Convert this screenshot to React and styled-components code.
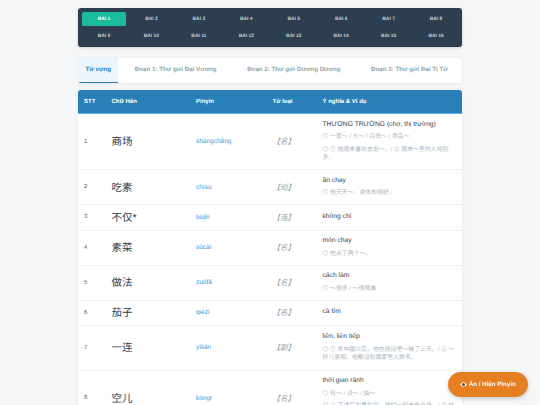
import React, { useState } from "react";
import styled, { createGlobalStyle } from "styled-components";

const GlobalStyle = createGlobalStyle`
  html, body {
    margin: 0;
    padding: 0;
    height: 405px;
    overflow: hidden;
    background: #f4f6f7;
    font-family: "Liberation Sans", "Noto Sans CJK SC", sans-serif;
    color: #2c3e50;
    text-rendering: geometricPrecision;
  }
  button { text-rendering: geometricPrecision; }
  * { box-sizing: border-box; }
`;

const Page = styled.div`
  width: 384px;
  margin: 0 auto;
  padding-top: 8.25px;
`;
const LessonNav = styled.nav`
  display: grid;
  grid-template-columns: repeat(8, 1fr);
  gap: 3px;
  padding: 3.75px;
  background: #2c3e50;
  border-radius: 3px;
  box-shadow: 0 1px 3px rgba(0, 0, 0, 0.15);
`;
const LessonButton = styled.button`
  height: 14.25px;
  padding: 0;
  border: none;
  border-radius: 1.5px;
  background: ${(p) => (p.$active ? "#1abc9c" : "transparent")};
  color: ${(p) => (p.$active ? "#fff" : "#c5ced6")};
  font-family: inherit;
  font-size: 4.9px;
  font-weight: 700;
  cursor: pointer;
`;
const Tabs = styled.div`
  display: flex;
  justify-content: space-between;
  height: 24.5px;
  margin-top: 10.75px;
  background: #fff;
  border-radius: 3px;
  overflow: hidden;
  box-shadow: 0 0.75px 3px rgba(0, 0, 0, 0.07);
`;
const Tab = styled.button`
  padding: 0 ${(p) => (p.$active ? "7.5px" : "14.2px")};
  border: none;
  border-bottom: 0.75px solid ${(p) => (p.$active ? "#2980b9" : "transparent")};
  background: ${(p) => (p.$active ? "#ebf5fb" : "#fff")};
  color: ${(p) => (p.$active ? "#2980b9" : "#95a5a6")};
  font-family: inherit;
  font-size: 6.2px;
  font-weight: 700;
  white-space: nowrap;
  cursor: pointer;
`;
const TableCard = styled.div`
  margin-top: 7.5px;
  background: #fff;
  border-radius: 3px 3px 0 0;
  overflow: hidden;
  box-shadow: 0 0.75px 4px rgba(0, 0, 0, 0.06);
`;
const Table = styled.table`
  width: 100%;
  table-layout: fixed;
  border-collapse: collapse;
`;
const HeadCell = styled.th`
  height: 23.5px;
  padding: 0 6px;
  background: #2980b9;
  border-bottom: 0.75px solid #5dade2;
  color: #fff;
  font-size: 6px;
  font-weight: 700;
  text-align: left;
`;
const Row = styled.tr`
  height: ${(p) => p.$h}px;
  border-bottom: 0.4px solid #ecf0f1;
`;
const Cell = styled.td`
  padding: 0 6px;
  vertical-align: middle;
`;
const Index = styled(Cell)`
  font-size: 6px;
  color: #555;
`;
const Hanzi = styled(Cell)`
  font-size: 10.5px;
  color: #2c3e50;
`;
const Pinyin = styled(Cell)`
  font-size: 6.5px;
  color: #3498db;
`;
const WordType = styled(Cell)`
  font-size: 7.5px;
  font-style: italic;
  color: #95a5a6;
`;
const Meaning = styled.div`
  font-size: 6.7px;
  line-height: 8.4px;
  color: #2c3e50;
`;
const Example = styled.div`
  margin-top: 4.2px;
  font-size: 5.9px;
  line-height: 8.25px;
  color: #aeb6bb;
`;
const ToggleButton = styled.button`
  position: fixed;
  left: 448px;
  top: 372px;
  width: 79.5px;
  height: 25px;
  display: flex;
  align-items: center;
  justify-content: center;
  gap: 2px;
  padding: 0;
  border: none;
  border-radius: 12.5px;
  background: #e67e22;
  box-shadow: 0 1.5px 4px rgba(0, 0, 0, 0.2);
  color: #fff;
  font-family: inherit;
  font-size: 6.2px;
  font-weight: 700;
  cursor: pointer;
`;

const lessons = Array.from({ length: 16 }, (_, i) => i + 1);
const tabs = [
  "Từ vựng",
  "Đoạn 1: Thư gửi Đại Vương",
  "Đoạn 2: Thư gửi Dương Dương",
  "Đoạn 3: Thư gửi Đại Tị Tử",
];
const words = [
  {
    h: 56, han: "商场", py: "shāngchǎng", type: "【名】", mean: "THƯƠNG TRƯỜNG (chợ, thị trường)",
    ex: ["◎ 一家～ / 大～ / 百货～ / 食品～", "◎ ① 她周末喜欢去逛～。/ ② 周末～里的人特别多。"],
  },
  { h: 35, han: "吃素", py: "chīsù", type: "【动】", mean: "ăn chay", ex: ["◎ 他天天～、身体却很好。"] },
  { h: 25.5, han: "不仅*", py: "bùjǐn", type: "【连】", mean: "không chỉ", ex: [] },
  { h: 35, han: "素菜", py: "sùcài", type: "【名】", mean: "món chay", ex: ["◎ 他点了两个～。"] },
  { h: 35, han: "做法", py: "zuòfǎ", type: "【名】", mean: "cách làm", ex: ["◎ ～很多 / ～很简单"] },
  { h: 25, han: "茄子", py: "qiézi", type: "【名】", mean: "cà tím", ex: [] },
  {
    h: 45, han: "一连", py: "yìlián", type: "【副】", mean: "liền, liên tiếp",
    ex: ["◎ ① 来中国以后，他在房间里～睡了三天。/ ② ～好几星期，他都没有跟家里人联系。"],
  },
  {
    h: 56, han: "空儿", py: "kòngr", type: "【名】", mean: "thời gian rảnh",
    ex: ["◎ 有～ / 没～ / 抽～", "◎ ① 下课后如果有空，我们一起去逛商场。/ ② 你有～吗？"],
  },
];

const EyeIcon = () => (
  <svg width="7" height="5" viewBox="0 0 14 10">
    <path d="M0.5 5C2.5 1.8 4.6 0.5 7 0.5S11.5 1.8 13.5 5C11.5 8.2 9.4 9.5 7 9.5S2.5 8.2 0.5 5Z" fill="#fff" />
    <circle cx="7" cy="5" r="3" fill="#5a4632" />
  </svg>
);

export default function App() {
  const [lesson, setLesson] = useState(1);
  const [tab, setTab] = useState(0);
  const [showPinyin, setShowPinyin] = useState(true);

  return (
    <>
      <GlobalStyle />
      <Page>
        <LessonNav>
          {lessons.map((n) => (
            <LessonButton key={n} $active={n === lesson} onClick={() => setLesson(n)}>
              BÀI {n}
            </LessonButton>
          ))}
        </LessonNav>
        <Tabs>
          {tabs.map((t, i) => (
            <Tab key={t} $active={i === tab} onClick={() => setTab(i)}>
              {t}
            </Tab>
          ))}
        </Tabs>
        <TableCard>
          <Table>
            <colgroup>
              <col width="27.5" />
              <col width="84.5" />
              <col width="76.5" />
              <col width="50" />
              <col width="145.5" />
            </colgroup>
            <thead>
              <tr>
                <HeadCell>STT</HeadCell>
                <HeadCell>Chữ Hán</HeadCell>
                <HeadCell>Pinyin</HeadCell>
                <HeadCell>Từ loại</HeadCell>
                <HeadCell>Ý nghĩa &amp; Ví dụ</HeadCell>
              </tr>
            </thead>
            <tbody>
              {words.map((w, i) => (
                <Row key={w.han} $h={w.h}>
                  <Index>{i + 1}</Index>
                  <Hanzi>{w.han}</Hanzi>
                  <Pinyin>{showPinyin ? w.py : ""}</Pinyin>
                  <WordType>{w.type}</WordType>
                  <Cell>
                    <Meaning>{w.mean}</Meaning>
                    {w.ex.map((e) => (
                      <Example key={e}>{e}</Example>
                    ))}
                  </Cell>
                </Row>
              ))}
            </tbody>
          </Table>
        </TableCard>
      </Page>
      <ToggleButton onClick={() => setShowPinyin(!showPinyin)}>
        <EyeIcon />
        Ẩn / Hiện Pinyin
      </ToggleButton>
    </>
  );
}
